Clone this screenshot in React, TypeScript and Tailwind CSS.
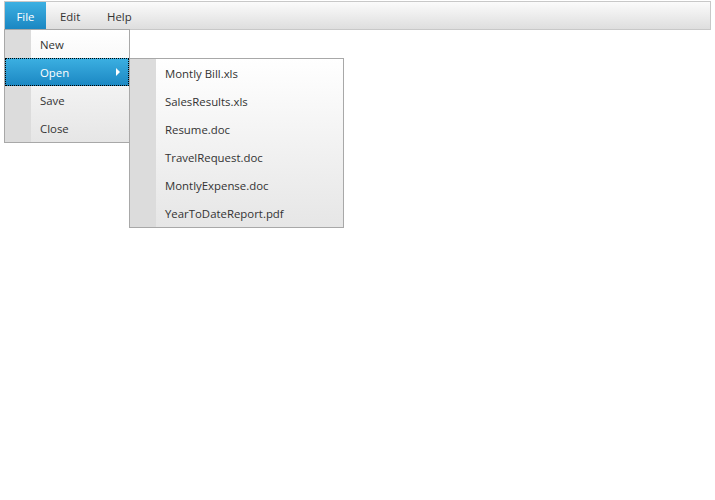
import React from "react";

const files = [
  "Montly Bill.xls",
  "SalesResults.xls",
  "Resume.doc",
  "TravelRequest.doc",
  "MontlyExpense.doc",
  "YearToDateReport.pdf",
];

const Arrow = () => (
  <svg width="4" height="8" viewBox="0 0 4 8" className="absolute left-[111px] top-[10px]">
    <path d="M0 0 L4 4 L0 8 Z" fill="#ffffff" />
  </svg>
);

const MenuItem = ({ label, active, children }: { label: string; active?: boolean; children?: React.ReactNode }) => (
  <div
    className={
      "relative flex h-[28px] items-center " +
      (active
        ? "bg-gradient-to-b from-[#3cb0e2] to-[#1a87c2] text-white outline outline-1 outline-dotted outline-black -outline-offset-1"
        : "text-[#333333]")
    }
  >
    <div className={"h-full w-[26px] shrink-0 " + (active ? "" : "bg-[#dcdcdc]")} />
    <span className="pl-[9px] pt-[2px]">{label}</span>
    {children}
  </div>
);

export default function App() {
  return (
    <div className="relative h-[500px] w-[715px] bg-white text-[11.4px]" style={{ fontFamily: "'Segoe UI', 'Open Sans', 'Noto Sans', sans-serif" }}>
      <div className="pt-px pl-[4px] pr-[4px]">
        <div className="flex h-[29px] items-stretch border border-[#c8c8c8] bg-gradient-to-b from-[#fbfbfb] to-[#dedede] text-[#333333]">
          <div className="flex w-[41px] items-center justify-center bg-gradient-to-b from-[#3cb0e2] to-[#1a87c2] pt-[2px] text-white">File</div>
          <div className="flex w-[47px] items-center pl-[14px] pt-[2px]">Edit</div>
          <div className="flex items-center pl-[14px] pt-[2px]">Help</div>
        </div>
      </div>

      <div className="absolute left-[4px] top-[29px] w-[126px] border border-[#a8a8a8] bg-gradient-to-b from-white to-[#e6e6e6]">
        <MenuItem label="New" />
        <MenuItem label="Open" active>
          <Arrow />
        </MenuItem>
        <MenuItem label="Save" />
        <MenuItem label="Close" />
      </div>

      <div className="absolute left-[129px] top-[58px] w-[215px] border border-[#a8a8a8] bg-gradient-to-b from-white to-[#e6e6e6]">
        {files.map((f) => (
          <MenuItem key={f} label={f} />
        ))}
      </div>
    </div>
  );
}
